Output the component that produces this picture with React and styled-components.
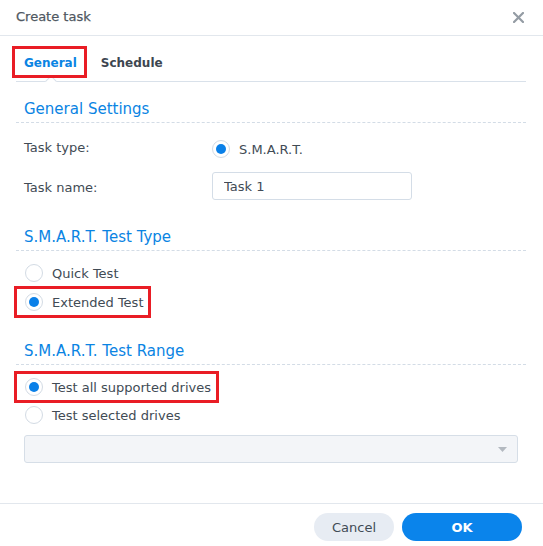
import React from "react";
import styled, { createGlobalStyle, css } from "styled-components";

const GlobalStyle = createGlobalStyle`
  html, body {
    margin: 0;
    padding: 0;
    background: #ffffff;
  }
  body {
    font-family: "DejaVu Sans", Verdana, sans-serif;
    font-size: 13px;
    color: #414b55;
  }
`;

const RED = "#e91d25";
const BLUE = "#0a84e3";

/* red marker frame drawn over a control */
const marked = css`
  position: relative;
  &::after {
    content: "";
    position: absolute;
    inset: ${(p) => p.$inset || "-2px 0 -2px -2px"};
    border: 3px solid ${RED};
    pointer-events: none;
  }
`;

const Dialog = styled.div`
  display: flex;
  flex-direction: column;
  height: 100vh;
  box-sizing: border-box;
`;

const Header = styled.header`
  height: 36px;
  display: flex;
  align-items: center;
  justify-content: space-between;
  padding: 0 19px 3px 16px;
  box-sizing: border-box;
  border-bottom: 1px solid #e2e7ed;
`;

const Title = styled.h1`
  margin: 0;
  font-size: 13px;
  font-weight: 400;
  color: #4f5862;
  -webkit-text-stroke: 0.25px #4f5862;
`;

const CloseButton = styled.button`
  display: flex;
  align-items: center;
  justify-content: center;
  width: 12px;
  height: 12px;
  padding: 0;
  border: 0;
  background: none;
  cursor: pointer;
  margin-top: 3px;
`;

const Body = styled.main`
  flex: 1;
  padding: 0 17px 0 16px;
`;

const TabBar = styled.nav`
  display: flex;
  gap: 8px;
  margin-top: 13px;
  padding-bottom: 6px;
  border-bottom: 1px solid #d9e1ea;
`;

const Tab = styled.div`
  position: relative;
  height: 26px;
  box-sizing: border-box;
  display: flex;
  align-items: center;
  padding: 2px 8px 0;
  font-size: 12px;
  font-weight: 700;
  color: ${(p) => (p.$active ? BLUE : "#3d4650")};
  ${(p) => p.$marked && marked}

  /* caret notch cut into the tab line */
  ${(p) =>
    p.$active &&
    css`
      &::before {
        content: "";
        position: absolute;
        left: 50%;
        bottom: -10px;
        width: 7px;
        height: 7px;
        margin-left: -3px;
        background: #ffffff;
        border-top: 1px solid #d9e1ea;
        border-left: 1px solid #d9e1ea;
        transform: rotate(45deg);
      }
    `}
`;

const SectionTitle = styled.h2`
  margin: ${(p) => p.$top || 15}px 0 0;
  padding: 2px 0 3px 8px;
  font-size: 15px;
  line-height: 20px;
  font-weight: 400;
  color: ${BLUE};
  border-bottom: 1px dashed #d3dce6;
`;

const FormRow = styled.div`
  display: flex;
  align-items: ${(p) => p.$align || "center"};
  min-height: 28px;
  margin-top: ${(p) => p.$top || 0}px;
  padding-left: 8px;
`;

const Label = styled.label`
  width: 188px;
  flex: none;
  padding-top: 3px;
  line-height: 20px;
`;

const Control = styled.div`
  display: flex;
  align-items: center;
  align-self: center;
`;

const TextInput = styled.input`
  width: 200px;
  height: 28px;
  box-sizing: border-box;
  padding: 1px 11px 0;
  border: 1px solid #d4dde7;
  border-radius: 3px;
  font: inherit;
  color: #414b55;
  outline: none;
`;

const OptionList = styled.div`
  display: flex;
  flex-direction: column;
  align-items: flex-start;
  gap: ${(p) => p.$gap || 0}px;
  margin-top: 8px;
`;

const Option = styled.label`
  display: inline-flex;
  align-items: center;
  gap: 9px;
  height: 28px;
  padding: 0 8px 0 ${(p) => (p.$flat ? 0 : 9)}px;
  cursor: pointer;
  ${(p) => p.$marked && marked}
`;

const Radio = styled.span`
  width: 18px;
  height: 18px;
  box-sizing: border-box;
  border-radius: 50%;
  border: 1px solid #d3dbe4;
  background: #ffffff;
  display: flex;
  align-items: center;
  justify-content: center;
  flex: none;

  &::before {
    content: "";
    width: 10px;
    height: 10px;
    border-radius: 50%;
    background: ${(p) => (p.$checked ? "#0a80e8" : "transparent")};
  }
`;

const Select = styled.div`
  display: flex;
  align-items: center;
  justify-content: flex-end;
  height: 28px;
  box-sizing: border-box;
  margin: 6px 8px 0 8px;
  padding-right: 10px;
  background: #f3f5f8;
  border: 1px solid #d6dee7;
  border-radius: 3px;
`;

const Footer = styled.footer`
  height: 43px;
  box-sizing: border-box;
  display: flex;
  justify-content: flex-end;
  gap: 8px;
  padding: 9px 21px 0 0;
  border-top: 1px solid #e2e7ed;
`;

const Button = styled.button`
  width: ${(p) => p.$width}px;
  height: 28px;
  border: 0;
  border-radius: 14px;
  font-family: inherit;
  font-size: 13px;
  cursor: pointer;
  ${(p) =>
    p.$primary
      ? css`
          background: #0a84eb;
          color: #ffffff;
          font-weight: 700;
        `
      : css`
          background: #e7ecf3;
          color: #414b55;
        `}
`;

function CloseIcon() {
  return (
    <svg width="11" height="11" viewBox="0 0 11 11">
      <path d="M1 1 L10 10 M10 1 L1 10" stroke="#949ca4" strokeWidth="2.2" strokeLinecap="square" />
    </svg>
  );
}

function Caret() {
  return (
    <svg width="9" height="5" viewBox="0 0 9 5">
      <path d="M0 0 H9 L4.5 5 Z" fill="#b3b9c0" />
    </svg>
  );
}

function RadioOption({ checked, marked, children }) {
  return (
    <Option $marked={marked}>
      <Radio $checked={checked} />
      {children}
    </Option>
  );
}

export default function App() {
  return (
    <>
      <GlobalStyle />
      <Dialog>
        <Header>
          <Title>Create task</Title>
          <CloseButton aria-label="Close">
            <CloseIcon />
          </CloseButton>
        </Header>

        <Body>
          <TabBar>
            <Tab $active $marked $inset="-3px -2px -3px -4px">
              General
            </Tab>
            <Tab>Schedule</Tab>
          </TabBar>

          <SectionTitle>General Settings</SectionTitle>
          <FormRow $align="flex-start" $top={12}>
            <Label>Task type:</Label>
            <Control>
              <Option $flat>
                <Radio $checked />
                S.M.A.R.T.
              </Option>
            </Control>
          </FormRow>
          <FormRow $top={9}>
            <Label>Task name:</Label>
            <TextInput defaultValue="Task 1" />
          </FormRow>

          <SectionTitle $top={25}>S.M.A.R.T. Test Type</SectionTitle>
          <OptionList $gap={1}>
            <RadioOption>Quick Test</RadioOption>
            <RadioOption checked marked>
              Extended Test
            </RadioOption>
          </OptionList>

          <SectionTitle $top={23}>S.M.A.R.T. Test Range</SectionTitle>
          <OptionList>
            <RadioOption checked marked>
              Test all supported drives
            </RadioOption>
            <RadioOption>Test selected drives</RadioOption>
          </OptionList>
          <Select>
            <Caret />
          </Select>
        </Body>

        <Footer>
          <Button $width={80}>Cancel</Button>
          <Button $primary $width={120}>
            OK
          </Button>
        </Footer>
      </Dialog>
    </>
  );
}
